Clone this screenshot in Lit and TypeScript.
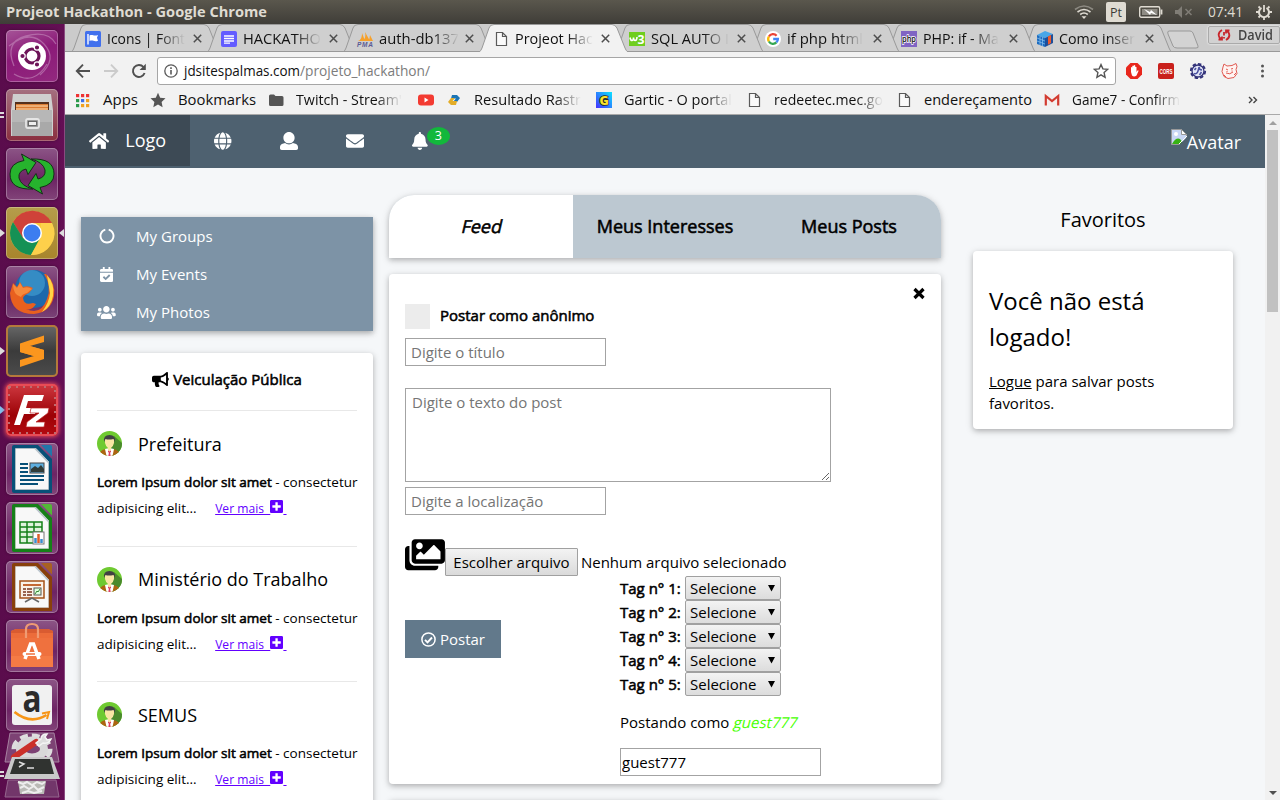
import { LitElement, html, svg, css, nothing } from "lit";
import { customElement, property } from "lit/decorators.js";

const FA: Record<string, [number, string]> = {
  home: [576, "M280.37 148.26L96 300.11V464a16 16 0 0 0 16 16l112.06-.29a16 16 0 0 0 15.92-16V368a16 16 0 0 1 16-16h64a16 16 0 0 1 16 16v95.64a16 16 0 0 0 16 16.05L464 480a16 16 0 0 0 16-16V300L295.67 148.26a12.19 12.19 0 0 0-15.3 0zM571.6 251.47L488 182.56V44.05a12 12 0 0 0-12-12h-56a12 12 0 0 0-12 12v72.61L318.47 43a48 48 0 0 0-61 0L4.34 251.47a12 12 0 0 0-1.6 16.9l25.5 31A12 12 0 0 0 45.15 301l235.22-193.74a12.19 12.19 0 0 1 15.3 0L530.9 301a12 12 0 0 0 16.9-1.6l25.5-31a12 12 0 0 0-1.7-16.93z"],
  globe: [496, "M336.5 160C322 70.7 287.8 8 248 8s-74 62.7-88.5 152h177zM152 256c0 22.2 1.2 43.5 3.3 64h185.3c2.1-20.5 3.3-41.8 3.3-64s-1.2-43.5-3.3-64H155.3c-2.1 20.5-3.3 41.8-3.3 64zm324.7-96c-28.6-67.9-86.5-120.4-158-141.6 24.4 33.8 41.2 84.7 50 141.6h108zM177.2 18.4C105.8 39.6 47.8 92.1 19.3 160h108c8.7-56.9 25.5-107.8 49.9-141.6zM487.4 192H372.7c2.1 21 3.3 42.5 3.3 64s-1.2 43-3.3 64h114.6c5.5-20.5 8.6-41.8 8.6-64s-3.1-43.5-8.5-64zM120 256c0-21.5 1.2-43 3.3-64H8.6C3.2 212.5 0 233.8 0 256s3.2 43.5 8.6 64h114.6c-2-21-3.2-42.5-3.2-64zm39.5 96c14.5 89.3 48.7 152 88.5 152s74-62.7 88.5-152h-177zm159.3 141.6c71.4-21.2 129.4-73.7 158-141.6h-108c-8.8 56.9-25.6 107.8-50 141.6zM19.3 352c28.6 67.9 86.5 120.4 158 141.6-24.4-33.8-41.2-84.7-50-141.6h-108z"],
  user: [512, "M256 0c88.366 0 160 71.634 160 160s-71.634 160-160 160S96 248.366 96 160 167.634 0 256 0zm183.283 333.821l-71.313-17.828c-74.923 53.89-165.738 41.864-223.94 0l-71.313 17.828C29.981 344.505 0 382.903 0 426.955V464c0 26.51 21.49 48 48 48h416c26.51 0 48-21.49 48-48v-37.045c0-44.052-29.981-82.45-72.717-93.134z"],
  envelope: [512, "M502.3 190.8c3.9-3.1 9.7-.2 9.7 4.7V400c0 26.5-21.5 48-48 48H48c-26.5 0-48-21.5-48-48V195.6c0-5 5.7-7.8 9.7-4.7 22.4 17.4 52.1 39.5 154.1 113.6 21.1 15.4 56.7 47.8 92.2 47.6 35.7.3 72-32.8 92.3-47.6 102-74.1 131.6-96.3 154-113.7zM256 320c23.2.4 56.6-29.2 73.4-41.4 132.7-96.3 142.8-104.7 173.4-128.7 5.8-4.5 9.2-11.5 9.2-18.9v-19c0-26.5-21.5-48-48-48H48c-26.5 0-48 21.5-48 48v19c0 7.4 3.4 14.3 9.2 18.9 30.6 23.9 40.7 32.4 173.4 128.7 16.8 12.2 50.2 41.8 73.4 41.4z"],
  bell: [448, "M224 512c35.32 0 63.97-28.65 63.97-64H160.03c0 35.35 28.65 64 63.97 64zm215.39-149.71c-19.32-20.76-55.47-51.99-55.47-154.29 0-77.7-54.48-139.9-127.94-155.16V32c0-17.67-14.32-32-31.98-32s-31.98 14.33-31.98 32v20.84C118.56 68.1 64.08 130.3 64.08 208c0 102.3-36.15 133.53-55.47 154.29-6 6.45-8.66 14.16-8.61 21.71.11 16.4 12.98 32 32.1 32h383.8c19.12 0 32-15.6 32.1-32 .05-7.55-2.61-15.27-8.61-21.71z"],
  calendar: [448, "M436 160H12c-6.627 0-12-5.373-12-12v-36c0-26.51 21.49-48 48-48h48V12c0-6.627 5.373-12 12-12h40c6.627 0 12 5.373 12 12v52h128V12c0-6.627 5.373-12 12-12h40c6.627 0 12 5.373 12 12v52h48c26.51 0 48 21.49 48 48v36c0 6.627-5.373 12-12 12zM12 192h424c6.627 0 12 5.373 12 12v260c0 26.51-21.49 48-48 48H48c-26.51 0-48-21.49-48-48V204c0-6.627 5.373-12 12-12zm333.296 95.947l-28.169-28.398c-4.667-4.705-12.265-4.736-16.97-.068L194.12 364.665l-45.98-46.352c-4.667-4.705-12.266-4.736-16.971-.068l-28.397 28.17c-4.705 4.667-4.736 12.265-.068 16.97l82.601 83.269c4.667 4.705 12.265 4.736 16.97.068l142.953-141.805c4.705-4.667 4.736-12.265.068-16.97z"],
  users: [640, "M96 224c35.3 0 64-28.7 64-64s-28.7-64-64-64-64 28.7-64 64 28.7 64 64 64zm448 0c35.3 0 64-28.7 64-64s-28.7-64-64-64-64 28.7-64 64 28.7 64 64 64zm32 32h-64c-17.6 0-33.5 7.1-45.1 18.6 40.3 22.1 68.9 62 75.1 109.4h66c17.7 0 32-14.3 32-32v-32c0-35.3-28.7-64-64-64zm-256 0c61.9 0 112-50.1 112-112S381.9 32 320 32 208 82.1 208 144s50.1 112 112 112zm76.8 32h-8.3c-20.8 10-43.9 16-68.5 16s-47.6-6-68.5-16h-8.3C179.6 288 128 339.6 128 403.2V432c0 26.5 21.5 48 48 48h288c26.5 0 48-21.5 48-48v-28.8c0-63.6-51.6-115.2-115.2-115.2zm-223.7-13.4C161.5 263.1 145.6 256 128 256H64c-35.3 0-64 28.7-64 64v32c0 17.7 14.3 32 32 32h65.9c6.3-47.4 34.9-87.3 75.2-109.4z"],
  bullhorn: [576, "M576 240c0-23.63-12.95-44.04-32-55.12V32.01C544 23.26 537.02 0 512 0c-7.12 0-14.19 2.38-19.98 7.02l-85.03 68.03C364.28 109.19 310.66 128 256 128H64c-35.35 0-64 28.65-64 64v96c0 35.35 28.65 64 64 64h33.7c-1.39 10.48-2.18 21.14-2.18 32 0 39.77 9.26 77.35 25.56 110.94 5.19 10.69 16.52 17.06 28.4 17.06h74.28c26.05 0 41.69-29.84 25.9-50.56-16.4-21.52-26.15-48.36-26.15-77.44 0-11.11 1.62-21.79 4.41-32H256c54.66 0 108.28 18.81 150.98 52.95l85.03 68.03a32.023 32.023 0 0 0 19.98 7.02c24.92 0 32-22.78 32-32V295.13C563.05 284.04 576 263.63 576 240zm-96 141.42l-33.05-26.44C402.950 320 350 300 300 292v-104c50-8 103-28 147-63L480 98.580v282.840z"],
  plus: [448, "M400 32H48C21.5 32 0 53.5 0 80v352c0 26.5 21.5 48 48 48h352c26.5 0 48-21.5 48-48V80c0-26.5-21.5-48-48-48zm-32 252c0 6.6-5.4 12-12 12h-92v92c0 6.6-5.4 12-12 12h-56c-6.6 0-12-5.4-12-12v-92H92c-6.6 0-12-5.4-12-12v-56c0-6.6 5.4-12 12-12h92v-92c0-6.6 5.4-12 12-12h56c6.6 0 12 5.4 12 12v92h92c6.6 0 12 5.4 12 12v56z"],
  images: [576, "M480 416v16c0 26.51-21.49 48-48 48H48c-26.51 0-48-21.49-48-48V176c0-26.51 21.49-48 48-48h16v208c0 44.112 35.888 80 80 80h336zm96-80V80c0-26.51-21.49-48-48-48H144c-26.51 0-48 21.49-48 48v256c0 26.51 21.49 48 48 48h384c26.51 0 48-21.49 48-48zM256 128c0 26.51-21.49 48-48 48s-48-21.49-48-48 21.49-48 48-48 48 21.49 48 48zm-96 144l55.515-55.515c4.686-4.686 12.284-4.686 16.971 0L272 256l135.515-135.515c4.686-4.686 12.284-4.686 16.971 0L512 208v112H160v-48z"],
};

const fa = (name: string, size: number) => {
  const [w, d] = FA[name];
  return html`<svg class="fa" width=${(w * size) / 512} height=${size} viewBox="0 0 ${w} 512" fill="currentColor"><path d=${d}></path></svg>`;
};

/* Single-line label set to a fixed measure, as in the window chrome. */
@customElement("chrome-label")
export class ChromeLabel extends LitElement {
  static styles = css`
    :host { display: block; flex: none; }
    svg { display: block; overflow: visible; }
    text { font-family: "Open Sans", "Noto Sans", sans-serif; }
    .fade { mask-image: linear-gradient(to right, #000 calc(100% - 26px), transparent); }
  `;
  @property() text = "";
  @property({ type: Number }) w = 80;
  @property({ type: Number }) size = 14.8;
  @property() color = "#111";
  @property() weight = "400";
  @property({ type: Boolean }) fade = false;
  render() {
    return html`<svg class=${this.fade ? "fade" : ""} width=${this.w} height="20" viewBox="0 0 ${this.w} 20">
      <text x="0" y="15" textLength=${this.w} lengthAdjust="spacingAndGlyphs" font-size=${this.size} font-weight=${this.weight} fill=${this.color}>${this.text}</text>
    </svg>`;
  }
}

const docIcon = svg`<path d="M3.5 1.5h6l4 4v9h-10z M9.5 1.5v4h4" fill="#fafafa" stroke="#5a5a5a" stroke-width="1.2"/>`;
const favicons: Record<string, unknown> = {
  flag: svg`<rect width="16" height="16" rx="1.5" fill="#4170ed"/><path d="M3 3v10.5" stroke="#fff" stroke-width="1.4"/><path d="M4.5 4.5c3-1.5 4 1 8.500-.5l-1 2.800 1 2.900c-4 1.500-5-1-8.500.3z" fill="#fff"/>`,
  lines: svg`<rect width="16" height="16" rx="2" fill="#635cff"/><path d="M3 5h10M3 7.500h10M3 10h10M3 12.200h6" stroke="#fff" stroke-width="1.300"/>`,
  pma: svg`<path d="M1 10C4 9 5 6 5 2l3 8zM6 10c2-2 3-5 2-9l5 9zM12 10l1-6 3 6z" fill="#f7a12b"/><text x="0" y="15.500" font-family="Liberation Sans, sans-serif" font-size="6.500" font-weight="700" font-style="italic" textLength="16" fill="#5b5b94">PMA</text>`,
  doc: docIcon,
  w3: svg`<rect y="1" width="16" height="14" fill="#6fce1e"/><path d="M1 6.500q.5 3 2 3t1.500-3q0 3 1.700 3T8 6" fill="none" stroke="#fff" stroke-width="1.600"/><text x="8.500" y="13" font-family="Open Sans, sans-serif" font-size="13" font-weight="700" textLength="7" lengthAdjust="spacingAndGlyphs" fill="#fff">3</text>`,
  google: svg`<circle cx="8" cy="8" r="8" fill="#fff"/><g fill="none" stroke-width="2.300"><path d="M11.600 4.700A4.800 4.800 0 0 0 3.900 5.500" stroke="#ea4335"/><path d="M3.900 5.500a4.800 4.800 0 0 0 0 5" stroke="#fbbc05"/><path d="M3.900 10.500a4.800 4.800 0 0 0 7.500.9" stroke="#34a853"/><path d="M8.200 8h4.700a4.800 4.800 0 0 1-1.500 3.400" stroke="#4285f4"/></g>`,
  php: svg`<rect width="16" height="16" fill="#8064c3"/><text x="1" y="11" font-family="Open Sans, sans-serif" font-size="9.500" font-weight="600" textLength="14" lengthAdjust="spacingAndGlyphs" fill="#111" stroke="#fff" stroke-width="1.600" paint-order="stroke">php</text>`,
  cube: svg`<path d="M0 4l8-4 8 3-8 4z" fill="#48a6e8"/><path d="M0 4l8 3v9l-8-3z" fill="#1b6bc0"/><path d="M8 7l8-4v9l-8 4z" fill="#1d4e9a"/><path d="M11 5.500l3-1.500v8l-3 1.800z" fill="#ee5a2c"/><path d="M0 7l8 3M0 10l8 3M3 5v9M5.500 6v9" stroke="#9fd0f5" stroke-width=".6"/>`,
  apps: svg`${[0, 1, 2].map((r) => [0, 1, 2].map((c) => svg`<rect x=${1 + c * 5} y=${2 + r * 5} width="3.200" height="3.200" fill=${[["#e33", "#e33", "#e33"], ["#2b9a4b", "#3d6fe8", "#f0a020"], ["#2b9a4b", "#f0a020", "#f0a020"]][r][c]}></rect>`))}`,
  star: svg`<path d="M8 .8l2.200 4.900 5.300.6-3.900 3.600 1 5.300L8 12.500l-4.700 2.700 1.100-5.300L.5 6.300l5.300-.6z" fill="#555"/>`,
  folder: svg`<path d="M1 4q0-1.500 1.500-1.500H6L7.500 4H14q1.500 0 1.500 1.500v7q0 1.500-1.500 1.500H2.500Q1 14 1 12.500z" fill="#555"/>`,
  youtube: svg`<rect y="2.500" width="16" height="11" rx="3" fill="#f33b32"/><path d="M6.500 5.600v4.800l4-2.400z" fill="#fff"/>`,
  ect: svg`<path d="M6 3h5l3 3-3 4H7l3-3.500H5z" fill="#1c75b5"/><path d="M10 13H5l-3-3 3-4h4L6.500 9H11z" fill="#e3ad28"/>`,
  gartic: svg`<defs><linearGradient id="gg" x1="0" y1="1" x2="1" y2="0"><stop offset="0" stop-color="#4630ff"/><stop offset="1" stop-color="#0ae2ff"/></linearGradient></defs><rect width="16" height="16" fill="url(#gg)"/><text x="3.400" y="12.500" font-family="Open Sans, sans-serif" font-size="12.500" font-weight="800" fill="#fae42b" stroke="#222" stroke-width="1.500" paint-order="stroke">G</text>`,
  gmail: svg`<rect x="1" y="2.500" width="14" height="11" fill="#f4efee"/><path d="M1.800 13.500V4L8 9l6.200-5v9.500" fill="none" stroke="#d23b30" stroke-width="2.200"/>`,
};
const fav = (n: string) => html`<svg class="fav" width="16" height="16" viewBox="0 0 16 16">${favicons[n]}</svg>`;

@customElement("browser-chrome")
export class BrowserChrome extends LitElement {
  static styles = css`
    :host { display: block; height: 91px; background: #f2f2f2; }
    .strip { display: grid; height: 28px; background: #cecece; }
    .strip > * { grid-area: 1 / 1; }
    .shape { display: block; }
    .tabs { display: flex; padding-left: 20px; height: 28px; }
    .tab { width: 136px; flex: none; display: flex; align-items: center; box-sizing: border-box; height: 29px; }
    .fav { flex: none; display: block; overflow: visible; }
    .tab chrome-label { margin-left: 6px; }
    .user { justify-self: end; width: 62px; height: 16px; margin-top: 2px; border: 1px solid #aaa; border-radius: 2px; display: flex; align-items: center; gap: 7px; padding-left: 8px; background: #d2d2d2; filter: drop-shadow(0 0 1px #fff); }
    .bar { display: flex; height: 38px; align-items: center; padding-left: 10px; box-sizing: border-box; }
    .nav { display: flex; gap: 12px; align-items: center; }
    .url { margin-left: 10px; width: 945px; height: 26px; border: 1px solid #a6a6a6; border-radius: 3px; background: #fff; display: flex; align-items: center; padding: 0 6px; }
    .info { margin-right: 6px; }
    .star { margin-left: auto; }
    .ext { display: flex; gap: 16px; margin-left: 10px; align-items: center; }
    .ext svg { overflow: visible; }
    .marks { display: flex; height: 20px; padding-bottom: 4px; border-bottom: 1px solid #a9a9a9; align-items: center; }
    .mark { display: flex; align-items: center; }
  `;
  tabs: [string, string, number][] = [
    ["flag", "Icons | Font", 78], ["lines", "HACKATHO", 78], ["pma", "auth-db137", 80], ["doc", "Projeot Hac", 78],
    ["w3", "SQL AUTO I", 78], ["google", "if php html", 76], ["php", "PHP: if - Ma", 76], ["cube", "Como inser", 76],
  ];
  /* icon, label, label width, gap before icon, gap after icon, fades */
  marks: [string, string, number, number, number, boolean][] = [
    ["apps", "Apps", 35, 10, 12, false], ["star", "Bookmarks", 78, 12, 12, false], ["folder", "Twitch - Stream'", 106, 12, 12, true],
    ["youtube", "", 0, 16, 0, false], ["ect", "Resultado Rastr", 107, 12, 12, true], ["gartic", "Gartic - O portal", 108, 15, 12, true],
    ["doc", "redeetec.mec.go", 109, 14, 12, true], ["doc", "endereçamento", 108, 13, 12, false], ["gmail", "Game7 - Confirm", 108, 12, 12, true],
  ];
  render() {
    const edge = (i: number) => 8 + i * 136;
    const path = (i: number) => `M${edge(i) - 2} 28Q${edge(i)} 27 ${edge(i) + 1} 24L${edge(i) + 8} 4Q${edge(i) + 9} .5 ${edge(i) + 13} .5H${edge(i) + 131}Q${edge(i) + 134} .5 ${edge(i) + 136} 4L${edge(i) + 144} 24Q${edge(i) + 145} 27 ${edge(i) + 147} 28`;
    return html`
      <div class="strip">
        <svg class="shape" width="1215" height="28" viewBox="0 0 1215 28">
          <rect width="1215" height="28" fill="#cbcbcb"></rect>
          ${[7, 6, 5, 4, 0, 1, 2].map((i) => svg`<path d=${path(i)} fill="#cfcfcf" stroke="#999" stroke-width="1"></path>`)}
          <path d="M0 27.500H1215" stroke="#999"></path>
          <path d=${path(3)} fill="#f2f2f2" stroke="#999"></path>
          <path d="M416 28.300H562" stroke="#f2f2f2" stroke-width="1.600"></path>
          <path d="M1104 7h21q2 0 3 2l5 13q1 2-2 2h-19q-3 0-4-2l-5-12q-1-3 1-3z" fill="#d3d3d3" stroke="#999"></path>
        </svg>
        <div class="tabs">
          ${this.tabs.map(([ic, t, w]) => html`<div class="tab">${fav(ic)}<chrome-label .text=${t} .w=${w} fade></chrome-label>
            <svg style="margin-left:${86 - w}px" width="9" height="9" viewBox="0 0 9 9"><path d="M.8.8l7.400 7.400M8.200.8L.8 8.200" stroke="#4d4d4d" stroke-width="1.500"></path></svg></div>`)}
        </div>
        <div class="user">
          <svg width="14" height="14" viewBox="0 0 14 14" fill="none" stroke="#c8262b" stroke-width="1.800"><path d="M5 2Q0 5 2.500 9.500L4.500 11.500M1.500 11.500H5V8.500M9 12Q14 9 11.500 4.500L9.500 2.500M12.500 2.500H9v3M7 4v3.500M7 9v1.500"></path></svg>
          <chrome-label text="David" .w=${35} .size=${14} color="#444" weight="600"></chrome-label>
        </div>
      </div>
      <div class="bar">
        <div class="nav">
          <svg width="16" height="16" viewBox="0 0 16 16" fill="none" stroke="#505050" stroke-width="1.900"><path d="M15 8H2M8 1.700L1.800 8 8 14.300"></path></svg>
          <svg width="16" height="16" viewBox="0 0 16 16" fill="none" stroke="#cbcbcb" stroke-width="1.900"><path d="M1 8h13M8 1.700L14.200 8 8 14.300"></path></svg>
          <svg width="16" height="16" viewBox="0 0 16 16" fill="none" stroke="#505050" stroke-width="1.900"><path d="M13.600 10A6 6 0 1 1 12.500 4"></path><path d="M14.800.8v6.200H8.600z" fill="#505050" stroke="none"></path></svg>
        </div>
        <div class="url">
          <svg class="info" width="14" height="14" viewBox="0 0 14 14"><circle cx="7" cy="7" r="6.200" fill="none" stroke="#5a5a5a" stroke-width="1.300"></circle><path d="M7 6v4.500M7 3.300v1.600" stroke="#5a5a5a" stroke-width="1.600"></path></svg>
          <chrome-label text="jdsitespalmas.com" .w=${116}></chrome-label>
          <chrome-label text="/projeto_hackathon/" .w=${130} color="#7c7c7c"></chrome-label>
          <svg class="star" width="16" height="16" viewBox="0 0 16 16" fill="none" stroke="#555" stroke-width="1.400"><path d="M8 1.600l1.900 4.300 4.700.5-3.500 3.200 1 4.700L8 11.900l-4.100 2.400 1-4.700L1.400 6.400l4.700-.5z"></path></svg>
        </div>
        <div class="ext">
          <svg width="16" height="16" viewBox="0 0 16 16"><path d="M4.500 0h7L16 4.500v7L11.500 16h-7L0 11.500v-7z" fill="#e8271d"></path><path d="M5 9V4.500q.8-1 1.300 0V3q.8-1 1.500 0v-.5q.8-.8 1.400 0V4q.9-.8 1.300.2V9l1-1.500q1-.5 1 .5l-2 4.500Q8 14.500 6 12.500z" fill="#fff"></path></svg>
          <svg width="16" height="16" viewBox="0 0 16 16"><rect width="16" height="16" rx="2" fill="#c9201c"></rect><text x="1.500" y="10.500" font-family="Liberation Sans,sans-serif" font-weight="700" font-size="6.800" textLength="13" lengthAdjust="spacingAndGlyphs" fill="#fff">CORS</text></svg>
          <svg width="16" height="16" viewBox="0 0 16 16"><circle cx="8" cy="8" r="7.200" fill="none" stroke="#303078" stroke-width="1.800" stroke-dasharray="3.500 2.100"></circle><circle cx="8" cy="8" r="6" fill="#e3e6f6" stroke="#303078" stroke-width="1.300"></circle><path d="M4 10.500q3 1 4-2.500t1-4l1 2.500 2 .5M6 5l-1.500 2M9.500 12l2-3" stroke="#4a50a0" stroke-width="1.500" fill="none"></path></svg>
          <svg width="16" height="16" viewBox="0 0 16 16" fill="#fff3f1" stroke="#e05a52" stroke-width="1"><path d="M1 4l1-3 3 2 5-.5 4-2 1 3-1 3 1 4-3 4-6 1-4-2-2-5z"></path><path d="M4 6l2 1M9 6l2-.5M4 10q4 2 7-1M5 8v1M10 7.500v1M2 12l2 2M12 12l2-2"></path></svg>
          <svg width="16" height="16" viewBox="0 0 16 16" fill="#555"><circle cx="8.500" cy="3" r="1.500"></circle><circle cx="8.500" cy="8" r="1.500"></circle><circle cx="8.500" cy="13" r="1.500"></circle></svg>
        </div>
      </div>
      <div class="marks">
        ${this.marks.map(([ic, t, w, before, after, fade]) => html`<div class="mark" style="margin-left:${before}px">${fav(ic)}
          ${t ? html`<chrome-label style="margin-left:${after}px" .text=${t} .w=${w} ?fade=${fade}></chrome-label>` : nothing}</div>`)}
        <svg style="margin-left:68px" width="10" height="8" viewBox="0 0 10 8" fill="none" stroke="#444" stroke-width="1.400"><path d="M1 1l3 3-3 3M5.500 1l3 3-3 3"></path></svg>
      </div>`;
  }
}

const officeDoc = (c: string, l: string, body: unknown) => svg`
  <path d="M8 2h24l14 14v34H8q-2 0-2-2V4q0-2 2-2z" fill=${c}/><path d="M35 2h9q2 0 2 2v9.500z" fill=${l}/>
  <path d="M9.500 5.500H30l12.500 13v28h-33z" fill="#f8f8f8" stroke="#ccc" stroke-width=".6"/><path d="M29 5.500l13.500 14" stroke="#b9c4cc" stroke-width="1.500"/>${body}`;

const glass = "linear-gradient(#8c5586,#6d2464 60%,#824479)";
const launcher: { bg: string; edge?: string; mark?: string; glow?: boolean; art: unknown }[] = [
  { bg: "linear-gradient(160deg,#a65598,#8b1a78 45%,#93297f)", art: svg`<path d="M3 16Q24-1 38 14t-4 31M50 14Q42 0 20 6T8 36M8 44q20 12 33-10" fill="none" stroke="#c48abd" stroke-width="1.300" opacity=".6"/><circle cx="26" cy="26" r="14" fill="#fff"/><circle cx="26" cy="26" r="7" fill="none" stroke="#6d1458" stroke-width="3.200"/><g fill="#6d1458" stroke="#fff" stroke-width="1.200"><circle cx="16.500" cy="26" r="2.700"/><circle cx="31" cy="17.500" r="2.700"/><circle cx="31" cy="34.500" r="2.700"/></g>` },
  { bg: "linear-gradient(#a47080,#8a2f3f)", mark: "double", art: svg`<path d="M7 5h38l2 16v26H5V21z" fill="#cfcfcf"/><rect x="9" y="13" width="34" height="14" fill="#55301c"/><path d="M10 15h32v8H10z" fill="#dc7d34"/><path d="M10 17h32M10 20h32" stroke="#ffe1b5" stroke-width="1"/><path d="M6 21h40v26H6z" fill="#a9a9a9"/><path d="M6 21h40v12H6z" fill="#b7b7b7"/><rect x="20" y="30" width="13" height="9" rx="2" fill="#999" stroke="#e5e5e5" stroke-width="1.800"/><rect x="22.500" y="32.500" width="8" height="4" fill="#eee" stroke="#555" stroke-width=".8"/>` },
  { bg: glass, art: svg`<g fill="#26b32d" stroke="#152f18" stroke-width="1" stroke-linejoin="round"><path d="M15.500 6L30 14.500 22 26.500 20 21Q12 23 13 30 15 38 27 41 4 42 4 26 4 15 18 12.500z"/><path d="M36.500 46L22 37.500 30 25.500 32 31Q40 29 39 22 37 14 25 11 48 10 48 26 48 37 34 39.500z"/></g>` },
  { bg: "linear-gradient(#b59d4b,#a8852c)", mark: "both", art: svg`<circle cx="26" cy="26" r="22" fill="#fac93b"/><path d="M7 15A22 22 0 0 1 46 16H26L16.500 31z" fill="#cf4239"/><path d="M7 15a22 22 0 0 0 18 33l9-17-8 5-9-5z" fill="#159155"/><path d="M46 16A22 22 0 0 1 25 48l10-17V16z" fill="#fdd04b"/><circle cx="26" cy="26" r="10" fill="#fff"/><circle cx="26" cy="26" r="8.500" fill="#3c7df0"/>` },
  { bg: "linear-gradient(#8c5586,#682361 60%,#7a4377)", art: svg`<circle cx="28" cy="23" r="19" fill="#1d68ab"/><circle cx="26" cy="17" r="13" fill="#49a9d8" opacity=".55"/><path d="M40 8q10 9 8 22-3 16-20 18Q5 48 4 27l3-10 4 4 3-5 3 5q5-2 10 1l-4 5q-5 2-6 5 1 8 10 5l3 1q-4 7-10 5 15 7 21-10 5-13-3-25z" fill="#e8601f"/><path d="M41 9q8 9 6 21-2 11-11 16 7-9 8-19z" fill="#ffd545"/><path d="M7 18l4 4 3-5 3 5q5-2 9 1l-5 4q-5 1-6 4-8-2-8-13z" fill="#f68a3c"/>` },
  { bg: "linear-gradient(#686868,#3b3b3b 50%,#4c4c4c)", edge: "#b5793b", mark: "left", art: svg`<path d="M38 10.500L14 18.500V27l14 4-14 4v7l24-8v-9l-14-4 14-4z" fill="#fb961e"/><path d="M14 27l24 7v-9l-18-5z" fill="#fb961e"/>` },
  { bg: "linear-gradient(#cf3941,#9c0206 60%,#b40b11)", edge: "#e94b55", mark: "blue", glow: true, art: svg`<rect x="3" y="3" width="46" height="46" fill="none" stroke="#bd6b70" stroke-width="2" stroke-dasharray="2 5"/><path d="M18 11h20l-2 6H22l-2 7h11l-2 6H18l-4 11H8z" fill="#fff"/><path d="M25 24h18l-1 5-12 9h9l-1 5H20l1-5 12-9h-9z" fill="#fff" stroke="#b22" stroke-width=".7"/>` },
  { bg: glass, art: officeDoc("#075078", "#2177aa", svg`<path d="M14 21h8M14 25h8M14 29h8M14 33h24M14 37h24M14 41h18" stroke="#075078" stroke-width="1.800"/><rect x="24" y="20" width="14" height="10" fill="#5eafe0" stroke="#444"/><path d="M25 29v-3l4-3 3 2 3-3 3 4v3z" fill="#303b38"/>`) },
  { bg: glass, art: officeDoc("#158018", "#52b835", svg`<path d="M14 20h22v21H14zM14 25h22M14 30h22M14 35h22M21 20v21M28 20v21" fill="#dff4dc" stroke="#158018" stroke-width="1.500"/><rect x="27" y="30" width="11" height="12" fill="#fff" stroke="#777"/><path d="M29.500 41v-5M35.500 41v-4" stroke="#3b8dd0" stroke-width="2.500"/><path d="M32.500 41v-9" stroke="#df5c2a" stroke-width="2.500"/>`) },
  { bg: glass, art: officeDoc("#88400b", "#a96121", svg`<rect x="14" y="20" width="24" height="17" fill="#faf2e8" stroke="#a45118" stroke-width="1.500"/><path d="M17 24h18" stroke="#c46834" stroke-width="2"/><path d="M17 28h3M17 31h3M17 34h3M21 28h5M21 31h5M21 34h5" stroke="#7a361c" stroke-width="1.500"/><rect x="28" y="27" width="7" height="7" fill="#dfd" stroke="#555"/><path d="M29 33l2-3 1 1 2-3" stroke="#368735" fill="none"/><path d="M26 37l-7 4M26 37l7 4" stroke="#666" stroke-width="1.500"/>`) },
  { bg: glass, art: svg`<path d="M5 11l5-2h32l5 2v36H5z" fill="#ef713e"/><path d="M5 11l5-2h32l5 2v7H5z" fill="#d95b31"/><path d="M5 13h42v5H5z" fill="#ec6c3a"/><path d="M5 36h42v11H5z" fill="#f57b45"/><path d="M20 18V9q0-5 6-5t6 5v9" fill="none" stroke="#ef9b73" stroke-width="2.200"/><path d="M19 39l5.500-15h3L33 39" fill="none" stroke="#fff" stroke-width="3.500"/><path d="M18.500 34h15" stroke="#fff" stroke-width="4" stroke-linecap="round"/><path d="M20 34h9" stroke="#ef713e" stroke-width="1.500"/>` },
  { bg: glass, art: svg`<rect x="6" y="6" width="40" height="40" rx="3" fill="#f1f1f1"/><text x="16.500" y="33" font-family="Open Sans, sans-serif" font-size="38" font-weight="700" textLength="19" lengthAdjust="spacingAndGlyphs" fill="#2b2b2b">a</text><path d="M8.500 33q16 13 32 3" fill="none" stroke="#f79516" stroke-width="2.600"/><path d="M36 34.500l7-1.500-2 7" fill="none" stroke="#f79516" stroke-width="2"/>` },
];

@customElement("app-launcher")
export class AppLauncher extends LitElement {
  static styles = css`
    :host { display: flex; flex-direction: column; width: 64px; border-right: 1px solid #8a4a80; background: linear-gradient(to right, #5a0c4c, #640f54); overflow: hidden; }
    .list { display: flex; flex-direction: column; gap: 7px; padding-top: 6px; }
    .row { display: flex; align-items: center; height: 52px; flex: none; }
    .side { width: 6px; height: 12px; flex: none; display: block; }
    .tile { width: 52px; height: 52px; box-sizing: border-box; border-radius: 5px; flex: none; box-shadow: inset 0 0 0 1px var(--edge, rgba(255,255,255,.28)), 0 0 3px rgba(0,0,0,.35); }
    .thick { box-shadow: inset 0 0 0 2px var(--edge); }
    .glow { box-shadow: inset 0 0 0 2px var(--edge), 0 0 4px 1px #e44a58; }
    .tile svg { display: block; overflow: visible; }
    .pile { display: block; margin-top: 1px; flex: none; }
  `;
  render() {
    return html`<div class="list">${launcher.map((l) => html`<div class="row">
      <svg class="side" viewBox="0 0 6 12">${l.mark === "double" ? svg`<path d="M0 4h4M0 8h4" stroke="#ddd" stroke-width="2"/>` : l.mark ? svg`<path d="M0 2l5 4-5 4z" fill=${l.mark === "blue" ? "#7cc3f0" : "#ddd"}/>` : nothing}</svg>
      <div class="tile ${l.edge ? "thick" : ""} ${l.glow ? "glow" : ""}" style="background:${l.bg};${l.edge ? `--edge:${l.edge}` : ""}"><svg width="52" height="52" viewBox="0 0 52 52">${l.art}</svg></div>
      <svg class="side" viewBox="0 0 6 12">${l.mark === "both" ? svg`<path d="M6 2L1 6l5 4z" fill="#ddd"/>` : nothing}</svg>
    </div>`)}</div>
    <svg class="pile" width="64" height="69" viewBox="0 0 64 69">
      <path d="M10 1h44l5 29H5z" fill="#7d4274" stroke="#a681a0"/><path d="M8 48h48l3 17H5z" fill="#72366a" stroke="#95668e"/>
      <ellipse cx="32" cy="17" rx="16" ry="11" fill="none" stroke="#dedede" stroke-width="9" stroke-dasharray="7 3.600"/><ellipse cx="32" cy="17" rx="12" ry="8.500" fill="none" stroke="#d9d9d9" stroke-width="8"/>
      <path d="M14 25L36 10" stroke="#cb3029" stroke-width="6" stroke-linecap="round"/><path d="M36 11l5-4q0-5 6-5l-2 3 2 3 4-1q-2 5-8 4l-4 3z" stroke="#f4f4f4" stroke-width="1.500" fill="#ddd"/>
      <path d="M12 25h40l8 22H4z" fill="#c9c9c9"/><path d="M15 27h35l4 15H10z" fill="#303330"/><path d="M19 30l5 2-5 3M27 36h7" stroke="#ddd" stroke-width="1.500" fill="none"/>
      <path d="M0 40h4M0 44h4" stroke="#ddd" stroke-width="1.800"/>
      <path d="M18 49h28l-2 13H20z" fill="#b9b9b5"/><path d="M18 50l5 2 4-2 5 3 5-3 5 2 3-2M20 56l4-2 5 3 5-3 4 4 6-3M22 61l6-2 6 2 8-2" stroke="#eee" stroke-width="2" fill="none"/>
    </svg>`;
  }
}

const avatar = html`<svg class="avatar" width="25" height="25" viewBox="0 0 25 25"><defs><clipPath id="ac"><circle cx="12.500" cy="12.500" r="12.500"/></clipPath></defs><g clip-path="url(#ac)"><rect width="25" height="25" fill="#6fca31"/><path d="M17 5l8 7v13H12z" fill="#4a8a2c"/><path d="M2 25q0-6 7-7l7 0q7 1 7 7z" fill="#ad6512"/><path d="M8 18l4.500-1 4.500 1-1.500 7h-6z" fill="#fff"/><path d="M8 8q4.500-3 9 0v4q-1 4-3 5v3l-1.500 1L11 20v-3q-2-1-3-5z" fill="#f9e6a5"/><path d="M7 11Q6 4 12.500 4T18 11l-1.500-3q-5 1-8 0z" fill="#414143"/><path d="M11 19.500l1.500 1 1.500-1v2l-1.500-.5-1.500.5zM12 21h1l.7 4h-2.400z" fill="#dd3d63"/></g></svg>`;

@customElement("feed-page")
export class FeedPage extends LitElement {
  static styles = css`
    :host { display: grid; grid-template-columns: 1fr 15px; height: 685px; overflow: hidden; background: #f5f7f9; font: 15px/22.5px "Open Sans", sans-serif; color: #000; }
    .fa { display: inline-block; flex: none; }
    .page { overflow: hidden; height: 685px; }
    .nav { height: 53px; background: #4e6170; color: #fff; display: flex; font-size: 18px; }
    .brand { width: 125px; height: 51px; box-sizing: border-box; background: #3d4a55; display: flex; align-items: center; padding-left: 24px; gap: 16px; }
    .ic { width: 66px; height: 51px; display: flex; align-items: center; justify-content: center; }
    .bell { width: auto; padding-left: 24px; }
    .badge { background: #12b83b; border-radius: 50%; width: 23px; height: 18px; font-size: 12.500px; line-height: 17px; text-align: center; margin: -9px 0 0 -1px; }
    .me { margin-left: auto; display: flex; padding: 14px 24px 0 0; line-height: 27px; }
    .cols { display: grid; grid-template-columns: 292px 552px 260px; padding: 27px 0 0 16px; }
    .mid { margin-left: 16px; width: 552px; }
    .right { margin-left: 48px; width: 260px; }
    .card { background: #fff; border-radius: 4px; box-shadow: 0 2px 5px rgba(0,0,0,.18), 0 2px 8px rgba(0,0,0,.14); }
    .left { padding-top: 22px; }
    .menu { background: #7d93a6; color: #fff; box-shadow: 0 2px 5px rgba(0,0,0,.22), 0 2px 8px rgba(0,0,0,.14); letter-spacing: .03px; }
    .menu div { height: 38px; display: flex; align-items: center; }
    .menu i { width: 19px; margin: 0 20px 0 16px; display: flex; justify-content: center; }
    .menu span { padding-top: 1px; }
    .pub { margin-top: 22px; padding: 14px 16px 0; height: 500px; }
    .b { -webkit-text-stroke: .55px currentColor; }
    .pubt { display: flex; justify-content: center; align-items: center; gap: 4px; height: 24px; }
    .org { border-top: 1px solid #e8e8e8; height: 134.600px; }
    .first { margin-top: 19px; }
    .who { display: flex; align-items: center; gap: 16px; padding-top: 20px; height: 25px; font-size: 18px; }
    .who span { padding-top: 1px; }
    .txt { margin: 13px 0 0; font-size: 13.520px; line-height: 26px; white-space: nowrap; }
    .more { font-size: 12.100px; color: #6200ff; text-decoration: underline; margin-left: 15px; white-space: pre; }
    .more .fa { vertical-align: -1px; }
    .tabs { display: grid; grid-template-columns: 1fr 1fr 1fr; height: 63px; border-radius: 25px 25px 0 0; background: #bcc8d1; overflow: hidden; text-align: center; font-size: 18px; line-height: 62px; box-sizing: border-box; }
    .tabsh { border-radius: 25px 25px 0 0; box-shadow: 0 2px 5px rgba(0,0,0,.18), 0 2px 8px rgba(0,0,0,.14); height: 63px; }
    .on { background: #fff; padding-left: 2px; }
    .slant { display: inline-block; transform: skewX(-13deg); }
    .form { margin-top: 16px; height: 510px; box-sizing: border-box; padding: 13px 16px 0; }
    .close { display: block; margin: 0 0 0 auto; }
    .anon { display: flex; align-items: center; gap: 10px; margin-top: 4px; height: 25px; }
    .anon .b { padding-bottom: 2px; }
    .box { width: 25px; height: 25px; background: #ececec; }
    input, textarea { display: block; box-sizing: border-box; margin: 0; font: 15px/22px "Open Sans", sans-serif; border: 1px solid #a3a3a3; border-radius: 0; background: #fff; color: #000; outline: 0; }
    input { width: 201px; height: 28px; padding: 0 5px 1px; }
    input::placeholder, textarea::placeholder { color: #757575; opacity: 1; }
    textarea { width: 426px; height: 94px; padding: 2px 6px; margin-top: 22px; }
    .i1 { margin-top: 9px; }
    .i2 { margin-top: 5px; }
    .file { display: flex; align-items: flex-end; margin-top: 20px; height: 41px; }
    .file .fa { margin-bottom: 4px; }
    .btn { box-sizing: border-box; width: 133px; height: 28px; border: 1px solid #a0a0a0; border-radius: 1px; background: linear-gradient(#f3f3f3, #dadada); text-align: center; line-height: 27px; }
    .none { margin: 0 0 3px 3px; }
    .split { display: grid; grid-template-columns: 215px 1fr; }
    .post { margin-top: 44px; width: 96px; height: 38px; background: #62798b; color: #fff; display: flex; align-items: center; justify-content: center; gap: 4px; }
    .tag { display: flex; align-items: center; gap: 4px; height: 24px; white-space: nowrap; }
    .tag .b { width: 61px; }
    .sel { box-sizing: border-box; width: 96px; height: 24px; border: 1px solid #a0a0a0; border-radius: 2px; background: linear-gradient(#f3f3f3, #dcdcdc); display: flex; align-items: center; justify-content: space-between; padding: 1px 5px 0 4px; }
    .as { margin: 15px 0 14px; }
    .as .slant { color: #46ff00; margin-left: 1px; }
    .guest { padding: 1px 1px 0; }
    .next { margin-top: 16px; height: 30px; }
    .fav { font-size: 20px; letter-spacing: -.01px; text-align: center; margin-top: 14px; height: 42px; }
    .log { height: 178px; box-sizing: border-box; padding: 32px 16px 0; }
    .log h3 { font-weight: 400; font-size: 24px; line-height: 36px; margin: 0 0 15px; }
    .log p { margin: 0; line-height: 22px; }
    .scroll { background: #f1f1f1; display: flex; flex-direction: column; align-items: center; height: 685px; }
    .thumb { width: 11px; height: 182px; background: #c1c1c1; }
    .arrow { display: block; margin: 6px 0 5px; }
    .down { margin: auto 0 5px; }
  `;
  render() {
    return html`
      <div class="page">
        <div class="nav">
          <div class="brand">${fa("home", 18)}<span>Logo</span></div>
          <div class="ic">${fa("globe", 18)}</div><div class="ic">${fa("user", 18)}</div><div class="ic">${fa("envelope", 18)}</div>
          <div class="ic bell">${fa("bell", 18)}<span class="badge">3</span></div>
          <div class="me"><svg width="16" height="16" viewBox="0 0 16 16"><path d="M.5.5h10l5 5v10H.5z" fill="#c9d7f6" stroke="#999"></path><path d="M10.500.5v5h5z" fill="#fff" stroke="#999"></path><circle cx="5" cy="5" r="2" fill="#fff"></circle><path d="M1 15q4-7 8-5l4 5z" fill="#38b115"></path><path d="M16 8L8 16h8z" fill="#4e6170"></path><path d="M16 7L8 15" stroke="#fff"></path></svg><span>Avatar</span></div>
        </div>
        <div class="cols">
          <div class="left">
            <div class="menu">
              <div><i><svg class="fa" width="16" height="16" viewBox="0 0 16 16" fill="none" stroke="#fff" stroke-width="1.900"><path d="M6.300 1.700a6.500 6.500 0 1 0 3.400 0"></path></svg></i><span>My Groups</span></div>
              <div><i>${fa("calendar", 15)}</i><span>My Events</span></div>
              <div><i>${fa("users", 15)}</i><span>My Photos</span></div>
            </div>
            <div class="card pub">
              <div class="pubt">${fa("bullhorn", 15)}<span class="b">Veiculação Pública</span></div>
              ${["Prefeitura", "Ministério do Trabalho", "SEMUS"].map((n, i) => html`<div class="org ${i ? "" : "first"}">
                <div class="who">${avatar}<span>${n}</span></div>
                <p class="txt"><span class="b">Lorem Ipsum dolor sit amet</span> - consectetur<br>adipisicing elit... <span class="more">Ver mais  ${fa("plus", 15)} </span></p>
              </div>`)}
            </div>
          </div>
          <div class="mid">
            <div class="tabsh"><div class="tabs b"><div class="on"><span class="slant">Feed</span></div><div>Meus Interesses</div><div>Meus Posts</div></div></div>
            <div class="card form">
              <svg class="close" width="12" height="13" viewBox="0 0 12 12"><path d="M1.500 1.500l9 9M10.500 1.500l-9 9" stroke="#000" stroke-width="3.200"></path></svg>
              <div class="anon"><span class="box"></span><span class="b">Postar como anônimo</span></div>
              <input class="i1" placeholder="Digite o título">
              <textarea placeholder="Digite o texto do post"></textarea>
              <input class="i2" placeholder="Digite a localização">
              <div class="file">${fa("images", 35.5)}<span class="btn">Escolher arquivo</span><span class="none">Nenhum arquivo selecionado</span></div>
              <div class="split">
                <div><div class="post"><svg width="15" height="15" viewBox="0 0 15 15" fill="none" stroke="#fff"><circle cx="7.500" cy="7.500" r="6.600" stroke-width="1.500"></circle><path d="M4 7.800l2.500 2.500L11 5.500" stroke-width="1.900"></path></svg><span>Postar</span></div></div>
                <div>
                  ${[1, 2, 3, 4, 5].map((n) => html`<div class="tag"><span class="b">Tag n° ${n}:</span><span class="sel"><span>Selecione</span><svg width="7" height="7" viewBox="0 0 7 7"><path d="M0 0h7L3.500 6.500z"></path></svg></span></div>`)}
                  <div class="as">Postando como <span class="slant">guest777</span></div>
                  <input class="guest" .value=${"guest777"}>
                </div>
              </div>
            </div>
            <div class="card next"></div>
          </div>
          <div class="right">
            <div class="fav">Favoritos</div>
            <div class="card log"><h3>Você não está logado!</h3><p><u>Logue</u> para salvar posts favoritos.</p></div>
          </div>
        </div>
      </div>
      <div class="scroll">
        <svg class="arrow" width="8" height="4" viewBox="0 0 8 4"><path d="M0 4l4-4 4 4z" fill="#a0a0a0"></path></svg>
        <div class="thumb"></div>
        <svg class="arrow down" width="8" height="4" viewBox="0 0 8 4"><path d="M0 0l4 4 4-4z" fill="#505050"></path></svg>
      </div>`;
  }
}

@customElement("app-root")
export class AppRoot extends LitElement {
  static styles = css`
    :host { display: grid; grid-template-rows: 24px 776px; width: 1280px; height: 800px; overflow: hidden; }
    .top { background: linear-gradient(#5a574d, #3f3d38); display: flex; align-items: center; padding: 0 8px 0 6px; }
    .ind { margin-left: auto; display: flex; align-items: center; }
    .lang { width: 20px; height: 20px; border-radius: 2px; background: #dfdbd2; display: flex; align-items: center; justify-content: center; margin: 0 13px 0 12px; }
    .desk { display: grid; grid-template-columns: 65px 1215px; }
    app-launcher { height: 776px; box-sizing: border-box; width: 65px; }
  `;
  render() {
    return html`
      <div class="top">
        <chrome-label text="Projeot Hackathon - Google Chrome" .w=${261} .size=${14} weight="700" color="#dfdbd2"></chrome-label>
        <div class="ind">
          <svg width="20" height="14" viewBox="0 0 20 14" fill="none" stroke="#dfdbd2" stroke-width="1.600"><path d="M1 4.500q9-7 18 0" stroke="#8d8a82"></path><path d="M3.500 7q6.500-5 13 0M6.200 9.500q3.800-3 7.600 0"></path><path d="M7.500 11.200h5L10 14z" fill="#dfdbd2" stroke="none"></path></svg>
          <div class="lang"><chrome-label text="Pt" .w=${12} .size=${13.5} color="#3c3b37"></chrome-label></div>
          <svg width="24" height="12" viewBox="0 0 24 12"><rect x=".7" y=".7" width="20" height="10.600" rx="1.500" fill="none" stroke="#dfdbd2" stroke-width="1.400"></rect><rect x="3" y="3" width="15.500" height="6" fill="#8f8c84"></rect><path d="M22.500 3.500v5" stroke="#dfdbd2" stroke-width="1.800"></path><path d="M5 3l6 3 1-2 6 5-6-2-1 2z" fill="#fff"></path></svg>
          <svg style="margin-left:12px" width="18" height="12" viewBox="0 0 18 12" fill="#807d76"><path d="M0 4h3l4-4v12L3 8H0z"></path><path d="M10.500 3l6 6M16.500 3l-6 6" stroke="#807d76" stroke-width="1.500"></path></svg>
          <chrome-label style="margin-left:15px" text="07:41" .w=${35} .size=${14} color="#dfdbd2"></chrome-label>
          <svg style="margin-left:13px" width="16" height="16" viewBox="0 0 16 16" fill="none" stroke="#dfdbd2"><path d="M5.500 3.800a5 5 0 1 0 5 0" stroke-width="2"></path><path d="M8 1v7" stroke-width="1.800"></path><path d="M2.500 2.500l1.500 1.500M0 8h3M2.500 13.500L4 12M8 16v-3M13.500 13.500L12 12M16 8h-3M13.500 2.500L12 4" stroke-width="1.800"></path></svg>
        </div>
      </div>
      <div class="desk">
        <app-launcher></app-launcher>
        <div><browser-chrome></browser-chrome><feed-page></feed-page></div>
      </div>`;
  }
}
